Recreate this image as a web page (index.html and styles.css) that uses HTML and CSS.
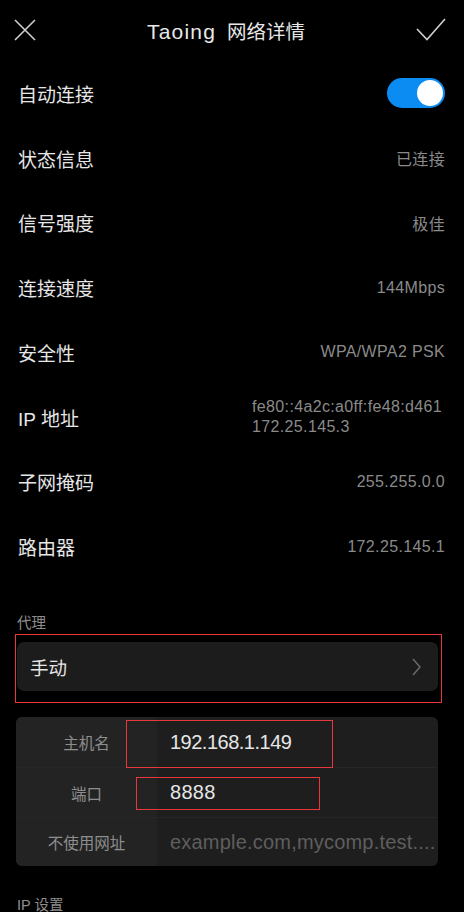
FILE: index.html
```html
<!DOCTYPE html>
<html lang="zh-CN">
<head>
<meta charset="utf-8">
<title>Taoing 网络详情</title>
<link rel="stylesheet" href="styles.css">
</head>
<body>
<div class="page">
  <header class="topbar">
    <svg class="icon-btn" width="22" height="22" viewBox="0 0 22 22"><path d="M1 1 L21 21 M21 1 L1 21" stroke="#cfcfcf" stroke-width="1.6" fill="none"/></svg>
    <div class="title"><span class="title-latin">Taoing</span>&nbsp; 网络详情</div>
    <svg class="icon-btn" width="30" height="24" viewBox="0 0 30 24"><path d="M1 11 L11 21.5 L29 1" stroke="#cfcfcf" stroke-width="1.6" fill="none"/></svg>
  </header>

  <div class="list">
    <div class="row"><span class="label">自动连接</span><span class="toggle"><span class="knob"></span></span></div>
    <div class="row"><span class="label">状态信息</span><span class="value">已连接</span></div>
    <div class="row"><span class="label">信号强度</span><span class="value">极佳</span></div>
    <div class="row"><span class="label">连接速度</span><span class="value">144Mbps</span></div>
    <div class="row"><span class="label">安全性</span><span class="value">WPA/WPA2 PSK</span></div>
    <div class="row"><span class="label">IP 地址</span><span class="value multi">fe80::4a2c:a0ff:fe48:d461<br>172.25.145.3</span></div>
    <div class="row"><span class="label">子网掩码</span><span class="value">255.255.0.0</span></div>
    <div class="row"><span class="label">路由器</span><span class="value">172.25.145.1</span></div>
  </div>

  <div class="section-title">代理</div>
  <div class="mark-box">
    <div class="select-card">
      <span class="select-text">手动</span>
      <svg width="9" height="18" viewBox="0 0 9 18"><path d="M1 1 L8 9 L1 17" stroke="#6a6a6a" stroke-width="1.5" fill="none"/></svg>
    </div>
  </div>

  <div class="form-card">
    <div class="frow"><div class="flabel">主机名</div><div class="fvalue big host">192.168.1.149</div></div>
    <div class="frow"><div class="flabel">端口</div><div class="fvalue big">8888</div></div>
    <div class="frow last"><div class="flabel">不使用网址</div><div class="fvalue placeholder">example.com,mycomp.test....</div></div>
    <div class="mark mark-host"></div>
    <div class="mark mark-port"></div>
  </div>

  <div class="section-title ip">IP 设置</div>
</div>
</body>
</html>
```
FILE: styles.css
```css
html, body {
  margin: 0;
  padding: 0;
  background: #000;
}
body {
  font-family: "Liberation Sans", "Noto Sans CJK SC", sans-serif;
  color: #e6e6e6;
  width: 464px;
  height: 912px;
  overflow: hidden;
}
.page {
  display: flex;
  flex-direction: column;
}
.topbar {
  height: 52px;
  padding: 4px 18px 0 14px;
  display: flex;
  align-items: center;
  justify-content: space-between;
}
.title {
  font-size: 19.5px;
  color: #e8e8e8;
}
.title-latin {
  font-size: 21px;
  letter-spacing: 1.2px;
}
.list {
  display: flex;
  flex-direction: column;
  margin-top: 5px;
}
.row {
  height: 64.75px;
  display: flex;
  align-items: center;
  justify-content: space-between;
  padding: 0 19px 0 18px;
}
.label {
  font-size: 19px;
  color: #e6e6e6;
}
.value {
  font-size: 16px;
  letter-spacing: 0.35px;
  color: #8a8a8a;
}
.value.multi {
  line-height: 20px;
  text-align: left;
  margin-right: 3px;
}
.toggle {
  width: 58px;
  height: 30px;
  border-radius: 15px;
  background: #0b8cf3;
  display: flex;
  align-items: center;
  justify-content: flex-end;
  padding: 0 2px;
  box-sizing: border-box;
}
.knob {
  width: 26px;
  height: 26px;
  border-radius: 50%;
  background: #fff;
}
.section-title {
  font-size: 14.5px;
  color: #8e8e8e;
  padding-left: 17px;
  margin-top: 33px;
  height: 22px;
  line-height: 22px;
}
.mark-box {
  margin: 0 22px 0 15px;
  border: 1px solid #e8383c;
  padding: 7px 3px 11px 1px;
}
.select-card {
  height: 49px;
  background: #1c1c1c;
  border-radius: 7px;
  display: flex;
  align-items: center;
  justify-content: space-between;
  padding: 0 17px 0 13px;
}
.select-text {
  font-size: 18.5px;
  color: #e6e6e6;
}
.form-card {
  position: relative;
  margin: 14px 26px 0 16px;
  border-radius: 6px;
  overflow: hidden;
  background: #1e1e1e;
  display: flex;
  flex-direction: column;
}
.frow {
  height: 50px;
  display: flex;
  border-top: 1px solid #262626;
  box-sizing: border-box;
}
.frow:first-child { border-top: none; }
.frow.last { height: 49px; }
.flabel {
  width: 141px;
  flex: none;
  background: #232323;
  display: flex;
  align-items: center;
  justify-content: center;
  font-size: 15.5px;
  color: #8e8e8e;
}
.fvalue {
  flex: 1;
  min-width: 0;
  display: flex;
  align-items: center;
  padding-left: 13px;
  white-space: nowrap;
  overflow: hidden;
}
.fvalue.big {
  font-size: 20px;
  color: #e6e6e6;
  letter-spacing: 0.3px;
}
.fvalue.big.host {
  letter-spacing: -0.5px;
}
.fvalue.placeholder {
  font-size: 20px;
  letter-spacing: 0.2px;
  color: #5e5e5e;
}
.mark {
  position: absolute;
  border: 1px solid #e8383c;
  box-sizing: border-box;
}
.mark-host {
  left: 110px;
  top: 3px;
  width: 207px;
  height: 48px;
}
.mark-port {
  left: 120px;
  top: 60px;
  width: 184px;
  height: 33px;
}
.section-title.ip {
  margin-top: 28px;
}
```
